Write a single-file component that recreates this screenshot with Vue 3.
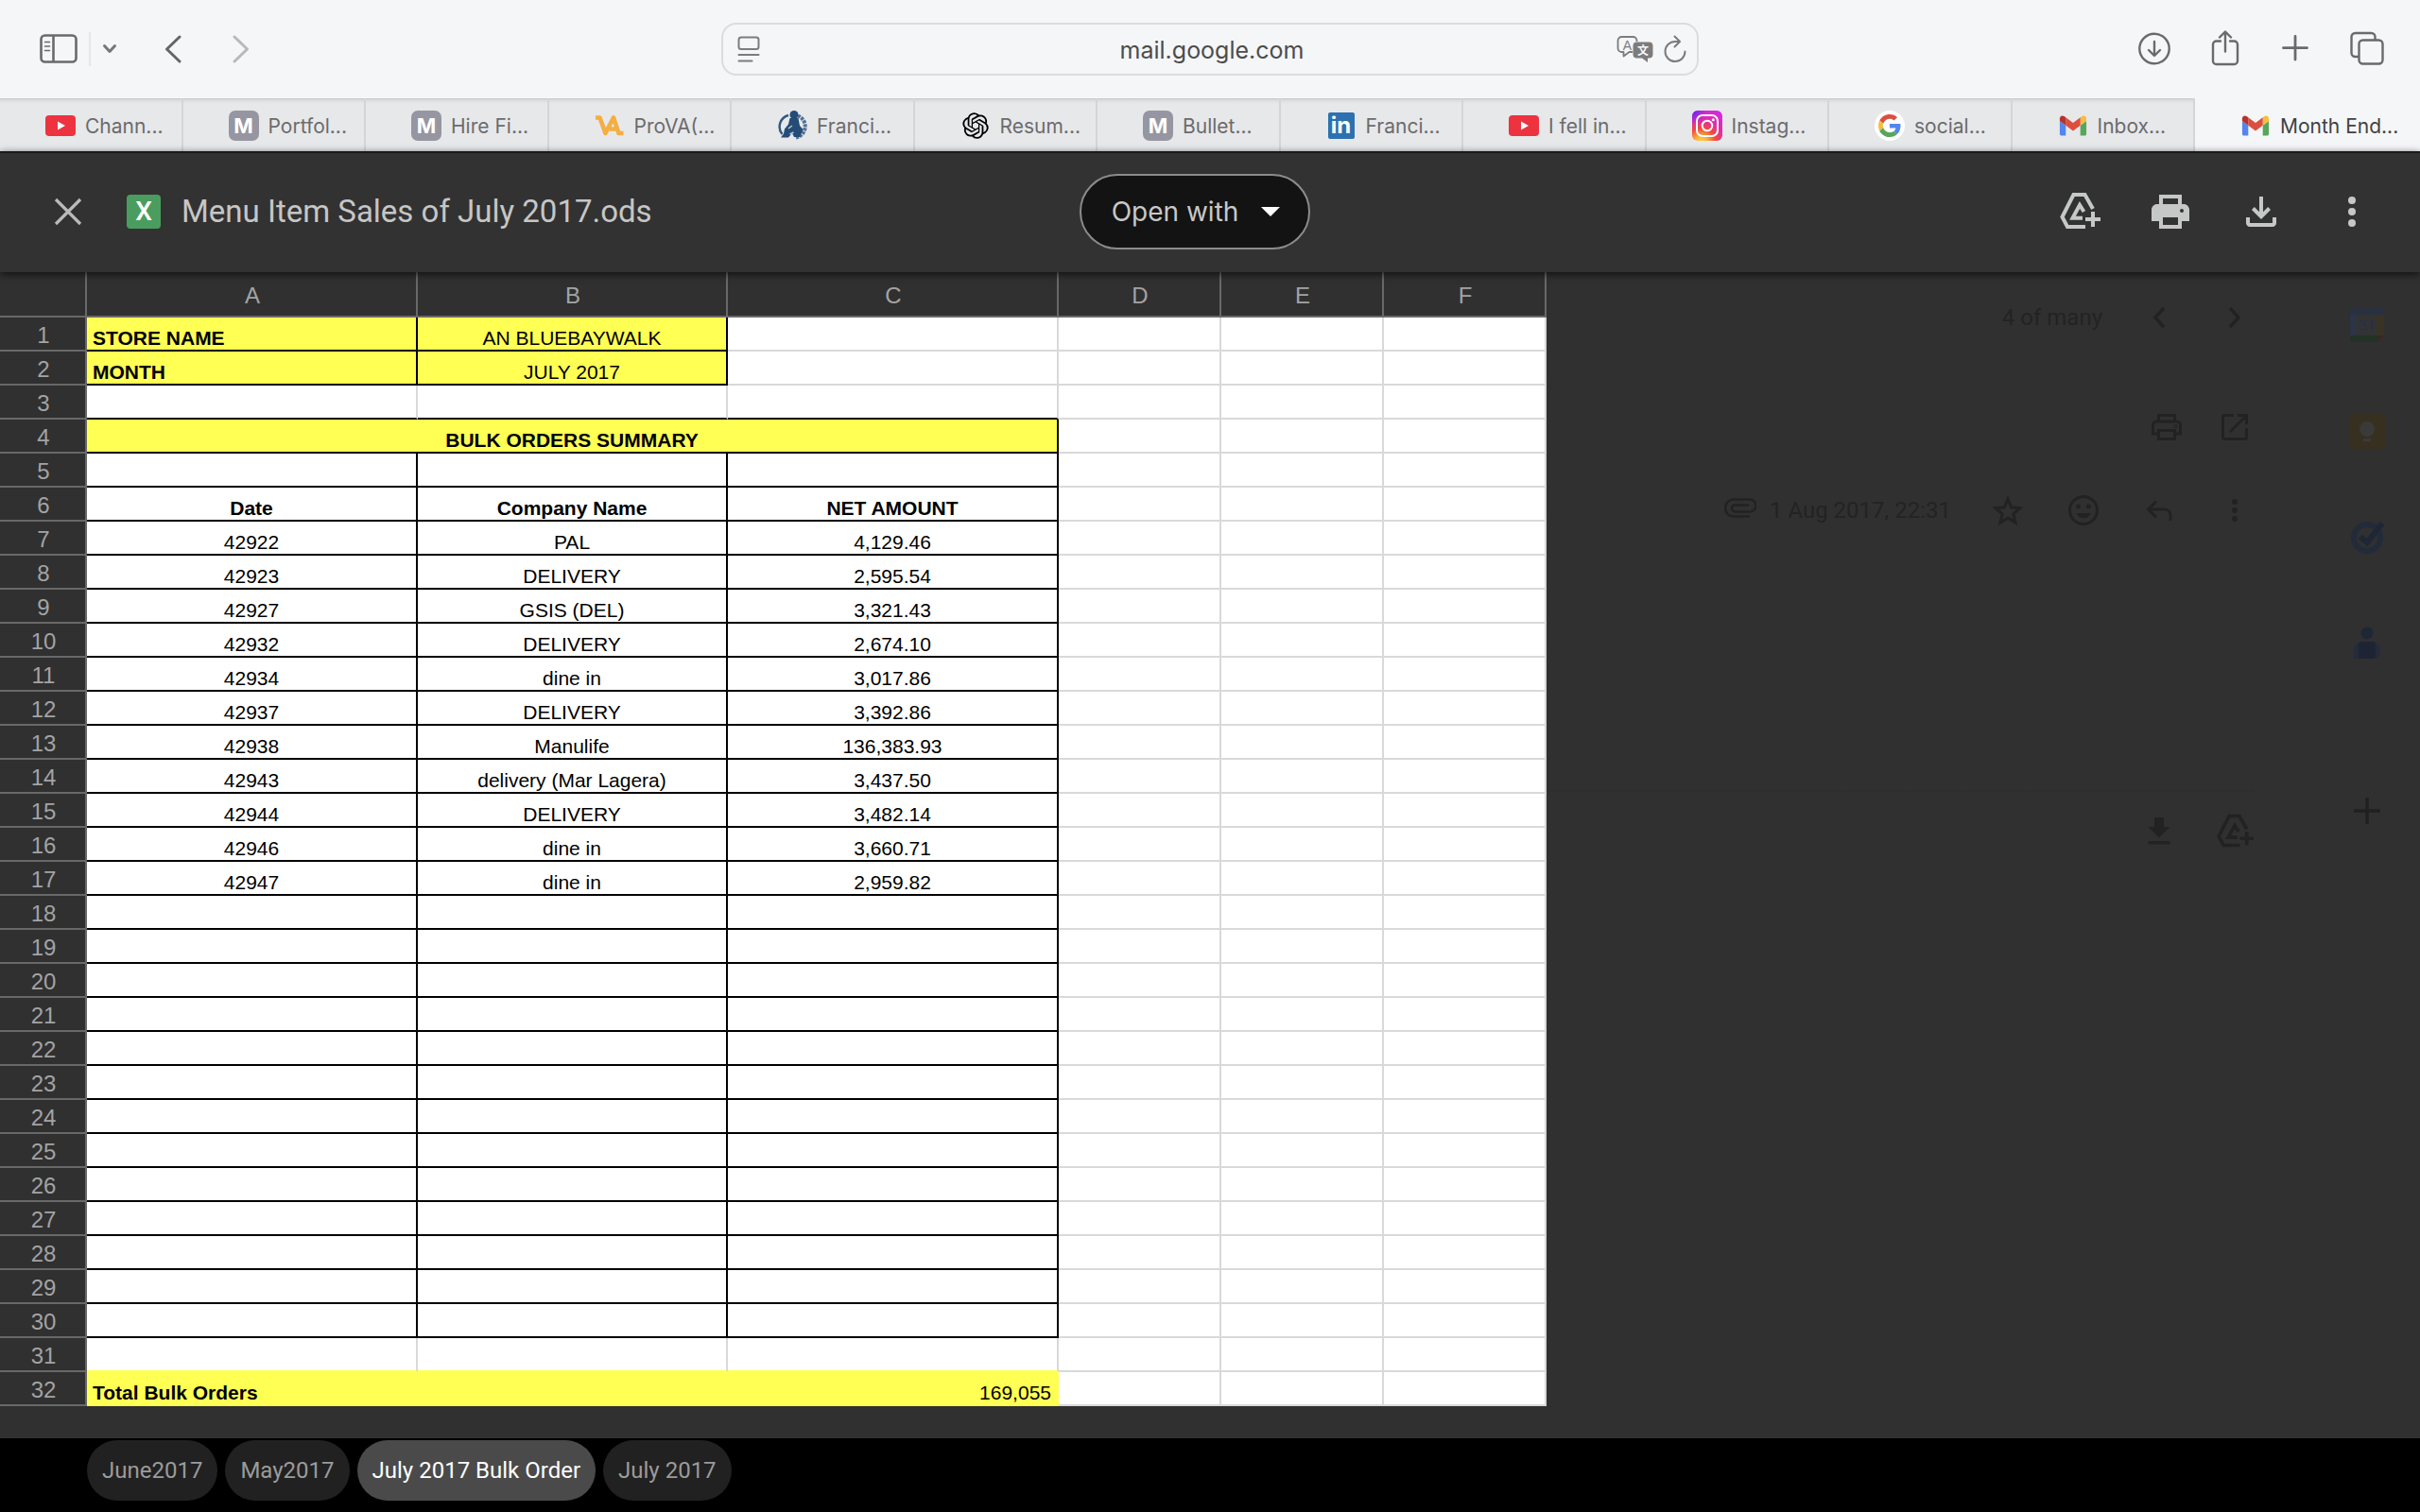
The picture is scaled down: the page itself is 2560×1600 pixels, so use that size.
<template>
  <div class="page">
    <!-- Browser toolbar -->
    <header class="toolbar">
      <div class="toolbar-left">
        <button class="tool" aria-label="Show sidebar">
          <svg width="40" height="32" viewBox="0 0 40 32" fill="none" stroke="#6a6a6c" stroke-width="2.6">
            <rect x="1.5" y="1.5" width="37" height="28" rx="4"></rect>
            <line x1="14.5" y1="1.5" x2="14.5" y2="29.5"></line>
            <path d="M5.5 8.5h5M5.5 13h5M5.5 17.500h5" stroke-width="1.6" stroke-linecap="round"></path>
          </svg>
        </button>
        <span class="tool-divider"></span>
        <button class="tool" aria-label="Tab groups">
          <svg width="16" height="12" viewBox="0 0 16 12" fill="none" stroke="#77777a" stroke-width="3"
            stroke-linecap="round" stroke-linejoin="round">
            <path d="M2.500 2.500l5.500 6 5.500-6"></path>
          </svg>
        </button>
        <button class="tool back" aria-label="Back">
          <svg width="18" height="30" viewBox="0 0 18 30" fill="none" stroke="#656567" stroke-width="3"
            stroke-linecap="round" stroke-linejoin="round">
            <path d="M16 2L2.500 15 16 28"></path>
          </svg>
        </button>
        <button class="tool forward" aria-label="Forward" disabled>
          <svg width="18" height="30" viewBox="0 0 18 30" fill="none" stroke="#b8b9bb" stroke-width="3"
            stroke-linecap="round" stroke-linejoin="round">
            <path d="M2 2l13.500 13L2 28"></path>
          </svg>
        </button>
      </div>

      <div class="address">
        <div class="address-side">
          <button class="tool" aria-label="Page menu">
            <svg width="24" height="28" viewBox="0 0 24 28" fill="none" stroke="#7c7c7d" stroke-width="2"
              stroke-linecap="round">
              <rect x="1.500" y="1.500" width="21" height="12.500" rx="2.500"></rect>
              <path d="M1.500 20h21M1.500 26.500h14"></path>
            </svg>
          </button>
        </div>
        <input class="address-input" type="text" aria-label="Address" v-model="address" />
        <div class="address-side right">
          <button class="tool" aria-label="Translate">
            <svg width="40" height="30" viewBox="0 0 40 30">
              <path d="M17 18h-3.500L7.500 22.500V18H5.500a4 4 0 0 1-4-4V6a4 4 0 0 1 4-4h12a4 4 0 0 1 4 4v1" fill="none"
                stroke="#7c7c7d" stroke-width="1.800" stroke-linejoin="round"></path>
              <path d="M21.500 7.500h13a4 4 0 0 1 4 4v9a4 4 0 0 1-4 4H33v4.500L27 24.500h-5.500a4 4 0 0 1-4-4v-9a4 4 0 0 1 4-4z"
                fill="#7c7c7d"></path>
              <text x="11.500" y="15.500" text-anchor="middle" class="glyph-a">A</text>
              <text x="28" y="21" text-anchor="middle" class="glyph-wen">文</text>
            </svg>
          </button>
          <button class="tool" aria-label="Reload">
            <svg width="24" height="30" viewBox="0 0 24 30" fill="none" stroke="#7c7c7d" stroke-width="2"
              stroke-linecap="round" stroke-linejoin="round">
              <path d="M22.500 17.500A10.500 10.500 0 1 1 12 7h4.500"></path>
              <path d="M11.500 1.500L17 7l-5.500 5.500"></path>
            </svg>
          </button>
        </div>
      </div>

      <div class="toolbar-right">
        <button class="tool" aria-label="Downloads">
          <svg width="40" height="40" viewBox="0 0 40 40" fill="none" stroke="#6a6a6c" stroke-width="2.400"
            stroke-linecap="round" stroke-linejoin="round">
            <circle cx="20" cy="19.500" r="15.700"></circle>
            <path d="M20 12v14.500M14 21l6 6 6-6"></path>
          </svg>
        </button>
        <button class="tool" aria-label="Share">
          <svg width="40" height="40" viewBox="0 0 40 40" fill="none" stroke="#6a6a6c" stroke-width="2.400"
            stroke-linecap="round" stroke-linejoin="round">
            <path d="M15 11.500h-4.500A3.500 3.500 0 0 0 7 15v17.500a3.500 3.500 0 0 0 3.500 3.500h19a3.500 3.500 0 0 0 3.500-3.500V15a3.500 3.500 0 0 0-3.500-3.500H25"></path>
            <path d="M20 22.500V2M14 7.500l6-6 6 6"></path>
          </svg>
        </button>
        <button class="tool" aria-label="New tab">
          <svg width="40" height="40" viewBox="0 0 40 40" fill="none" stroke="#6a6a6c" stroke-width="2.800"
            stroke-linecap="round">
            <path d="M19 6.500v24.500M6.500 18.700h25"></path>
          </svg>
        </button>
        <button class="tool" aria-label="Tab overview">
          <svg width="40" height="40" viewBox="0 0 40 40" fill="none" stroke="#6a6a6c" stroke-width="2.400"
            stroke-linejoin="round">
            <path d="M11 28H7.500a4 4 0 0 1-4-4V7a4 4 0 0 1 4-4h17a4 4 0 0 1 4 4v3.500"></path>
            <rect x="11.500" y="10.500" width="25" height="25" rx="4"></rect>
          </svg>
        </button>
      </div>
    </header>

    <!-- Browser tabs -->
    <nav class="tabs" aria-label="Open tabs">
      <button v-for="(tab, i) in tabs" :key="i" class="tab" :class="{ active: i === activeTab }"
        @click="activeTab = i">
        <svg v-if="tab.icon === 'youtube'" class="favicon" viewBox="0 0 32 32">
          <rect y="5" width="32" height="22" rx="4" fill="#ec333f"></rect>
          <path d="M13 11.500v9l8-4.500z" fill="#fff"></path>
        </svg>
        <span v-else-if="tab.icon === 'letter'" class="favicon letter">M</span>
        <svg v-else-if="tab.icon === 'prova'" class="favicon" viewBox="0 0 32 32" fill="none" stroke="#f4ae41"
          stroke-width="4.600" stroke-linejoin="round">
          <path d="M1 7.500h4.500l6 16.500L20 7.500l5.500 16.500h5M16 19.500h9"></path>
        </svg>
        <svg v-else-if="tab.icon === 'crest'" class="favicon" viewBox="0 0 32 32">
          <path d="M12 5A12.500 12.500 0 0 0 5.500 25" fill="none" stroke="#31587f" stroke-width="2.400"></path>
          <path d="M22 5.500a12 12 0 0 1-2 23" fill="none" stroke="#4f7093" stroke-width="4" stroke-dasharray="3 1"></path>
          <circle cx="18" cy="4.500" r="4.500" fill="#244c77"></circle>
          <path d="M13.500 8h9l1.500 8 3.500 4-3.500 8h-6l-2-4-4 4.500H4l3-4 1-5 4-5z" fill="#244c77"></path>
          <path d="M12 19l4-3M13.500 25l4-2" stroke="#b9c6d2" stroke-width="1.500"></path>
        </svg>
        <svg v-else-if="tab.icon === 'openai'" class="favicon" viewBox="-2 -2 28 28">
          <path
            d="M22.2819 9.8211a5.9847 5.9847 0 0 0-.5157-4.9108 6.0462 6.0462 0 0 0-6.5098-2.9A6.0651 6.0651 0 0 0 4.9807 4.1818a5.9847 5.9847 0 0 0-3.9977 2.9 6.0462 6.0462 0 0 0 .7427 7.0966 5.98 5.98 0 0 0 .511 4.9107 6.051 6.051 0 0 0 6.5146 2.9001A5.9847 5.9847 0 0 0 13.2599 24a6.0557 6.0557 0 0 0 5.7718-4.2058 5.9894 5.9894 0 0 0 3.9977-2.9001 6.0557 6.0557 0 0 0-.7475-7.0729zm-9.022 12.6081a4.4755 4.4755 0 0 1-2.8764-1.0408l.1419-.0804 4.7783-2.7582a.7948.7948 0 0 0 .3927-.6813v-6.7369l2.02 1.1686a.071.071 0 0 1 .038.052v5.5826a4.504 4.504 0 0 1-4.4945 4.4944zm-9.6607-4.1254a4.4708 4.4708 0 0 1-.5346-3.0137l.142.0852 4.783 2.7582a.7712.7712 0 0 0 .7806 0l5.8428-3.3685v2.3324a.0804.0804 0 0 1-.0332.0615L9.74 19.9502a4.4992 4.4992 0 0 1-6.1408-1.6464zM2.3408 7.8956a4.485 4.485 0 0 1 2.3655-1.9728V11.6a.7664.7664 0 0 0 .3879.6765l5.8144 3.3543-2.0201 1.1685a.0757.0757 0 0 1-.071 0l-4.8303-2.7865A4.504 4.504 0 0 1 2.3408 7.872zm16.5963 3.8558L13.1038 8.364 15.1192 7.2a.0757.0757 0 0 1 .071 0l4.8303 2.7913a4.4944 4.4944 0 0 1-.6765 8.1042v-5.6772a.79.79 0 0 0-.407-.667zm2.0107-3.0231l-.142-.0852-4.7735-2.7818a.7759.7759 0 0 0-.7854 0L9.409 9.2297V6.8974a.0662.0662 0 0 1 .0284-.0615l4.8303-2.7866a4.4992 4.4992 0 0 1 6.6802 4.66zM8.3065 12.863l-2.02-1.1638a.0804.0804 0 0 1-.038-.0567V6.0742a4.4992 4.4992 0 0 1 7.3757-3.4537l-.142.0805L8.704 5.459a.7948.7948 0 0 0-.3927.6813zm1.0976-2.3654l2.602-1.4998 2.6069 1.4998v2.9994l-2.5974 1.4997-2.6067-1.4997Z">
          </path>
        </svg>
        <span v-else-if="tab.icon === 'linkedin'" class="favicon linkedin"><b>in</b></span>
        <svg v-else-if="tab.icon === 'instagram'" class="favicon" viewBox="0 0 32 32">
          <defs>
            <radialGradient id="ig" cx="0.3" cy="1.08" r="1.1">
              <stop offset="0" stop-color="#fdd94f"></stop>
              <stop offset="0.2" stop-color="#f9b53c"></stop>
              <stop offset="0.45" stop-color="#f2493f"></stop>
              <stop offset="0.7" stop-color="#e22ca8"></stop>
              <stop offset="1" stop-color="#d62ad8"></stop>
            </radialGradient>
            <radialGradient id="ig-blue" cx="0" cy="0" r="0.5">
              <stop offset="0" stop-color="#4a27f5"></stop>
              <stop offset="1" stop-color="#8a2be2" stop-opacity="0"></stop>
            </radialGradient>
          </defs>
          <rect width="32" height="32" rx="6" fill="url(#ig)"></rect>
          <rect width="32" height="32" rx="6" fill="url(#ig-blue)"></rect>
          <g fill="none" stroke="#fff" stroke-width="2">
            <rect x="5" y="5" width="22" height="22" rx="6"></rect>
            <circle cx="16" cy="16" r="5.300"></circle>
          </g>
          <circle cx="22.300" cy="9.700" r="1.500" fill="#fff"></circle>
        </svg>
        <svg v-else-if="tab.icon === 'google'" class="favicon" viewBox="-8 -8 64 64">
          <circle cx="24" cy="24" r="32" fill="#fff"></circle>
          <path fill="#dc4f3f" d="M24 9.500c3.540 0 6.710 1.220 9.210 3.600l6.850-6.850C35.900 2.380 30.470 0 24 0 14.620 0 6.510 5.380 2.560 13.220l7.980 6.190C12.430 13.720 17.740 9.500 24 9.500z"></path>
          <path fill="#5485ee" d="M46.980 24.550c0-1.570-.15-3.090-.38-4.550H24v9.020h12.940c-.58 2.960-2.260 5.480-4.780 7.180l7.730 6c4.510-4.180 7.090-10.360 7.090-17.650z"></path>
          <path fill="#f4bf40" d="M10.530 28.590c-.48-1.450-.76-2.990-.76-4.590s.27-3.140.76-4.590l-7.980-6.190C.92 16.460 0 20.120 0 24c0 3.880.92 7.540 2.560 10.780l7.970-6.190z"></path>
          <path fill="#58a55c" d="M24 48c6.480 0 11.930-2.130 15.890-5.810l-7.730-6c-2.150 1.450-4.920 2.300-8.160 2.300-6.260 0-11.570-4.220-13.470-9.910l-7.980 6.190C6.510 42.620 14.620 48 24 48z"></path>
        </svg>
        <svg v-else class="favicon" viewBox="46 25 100 100">
          <path fill="#5485ee" d="M58 108h14V74L52 59v43c0 3.320 2.690 6 6 6"></path>
          <path fill="#58a55c" d="M120 108h14c3.320 0 6-2.690 6-6V59l-20 15"></path>
          <path fill="#f4bf40" d="M120 48v26l20-15v-8c0-7.420-8.470-11.650-14.400-7.200"></path>
          <path fill="#dc4f3f" d="M72 74V48l24 18 24-18v26L96 92"></path>
          <path fill="#b5332b" d="M52 51v8l20 15V48l-5.600-4.200c-5.940-4.450-14.400-.22-14.400 7.200"></path>
        </svg>
        <span class="tab-title">{{ tab.title }}</span>
      </button>
    </nav>

    <!-- Attachment viewer -->
    <main class="viewer">
      <div class="viewer-header">
        <div class="file">
          <button class="tool close" aria-label="Close">
            <svg width="32" height="32" viewBox="0 0 32 32" stroke="#bababa" stroke-width="3.200">
              <path d="M3 3l26 26M29 3L3 29"></path>
            </svg>
          </button>
          <span class="file-type">X</span>
          <h1 class="file-name">Menu Item Sales of July 2017.ods</h1>
        </div>
        <button class="open-with">
          Open with
          <svg width="20" height="10" viewBox="0 0 20 10" fill="#fff">
            <path d="M0 0h20L10 10z"></path>
          </svg>
        </button>
        <div class="actions">
          <button class="action" aria-label="Add to Drive">
            <svg width="48" height="48" viewBox="0 0 48 48" fill="none" stroke="#c6c7c7" stroke-width="4">
              <path d="M38 21L29.500 6h-12L5.500 29.500 11 40h19"></path>
              <path d="M28.500 24L24 17l-7.500 13.700H27M38 24v16M30 32h16"></path>
            </svg>
          </button>
          <button class="action" aria-label="Print">
            <svg width="48" height="48" viewBox="0 0 24 24" fill="#c6c7c7">
              <path fill-rule="evenodd"
                d="M6 8V3h12v5h-2V5H8v3zM5 8h14c1.660 0 3 1.340 3 3v6h-4v4H6v-4H2v-6c0-1.660 1.340-3 3-3zm3 7v4h8v-4zm10-4.500a1 1 0 1 0 0 2 1 1 0 0 0 0-2z">
              </path>
            </svg>
          </button>
          <button class="action" aria-label="Download">
            <svg width="48" height="48" viewBox="0 0 24 24" fill="#c6c7c7">
              <path
                d="M12 16l-5-5 1.400-1.450 2.600 2.600V4h2v8.150l2.600-2.600L17 11zM6 20q-.825 0-1.412-.587T4 18v-3h2v3h12v-3h2v3q0 .825-.587 1.413T18 20z">
              </path>
            </svg>
          </button>
          <button class="action" aria-label="More actions">
            <svg width="48" height="48" viewBox="0 0 24 24" fill="#c6c7c7">
              <circle cx="12" cy="6" r="2"></circle>
              <circle cx="12" cy="12" r="2"></circle>
              <circle cx="12" cy="18" r="2"></circle>
            </svg>
          </button>
        </div>
      </div>

      <div class="viewer-body">
        <!-- Spreadsheet -->
        <table class="sheet">
          <colgroup>
            <col class="col-num" />
            <col class="col-a" />
            <col class="col-b" />
            <col class="col-a" />
            <col class="col-d" />
            <col class="col-d" />
            <col class="col-d" />
          </colgroup>
          <thead>
            <tr>
              <th></th>
              <th v-for="c in columns" :key="c" scope="col">{{ c }}</th>
            </tr>
          </thead>
          <tbody>
            <tr v-for="row in rows" :key="row.num">
              <th scope="row">{{ row.num }}</th>
              <td v-for="(cell, i) in row.cells" :key="i" :colspan="cell.span || 1" :class="cell.cls">{{ cell.text }}</td>
              <td></td>
              <td></td>
              <td></td>
            </tr>
          </tbody>
        </table>

        <!-- Dimmed mail behind the viewer -->
        <div class="mail">
          <div class="mail-row pager">
            <span class="mail-text">4 of many</span>
            <svg class="mail-icon" viewBox="0 0 40 40" fill="none" stroke-width="3.400"><path d="M25 10L16 20l9 10"></path></svg>
            <svg class="mail-icon" viewBox="0 0 40 40" fill="none" stroke-width="3.400"><path d="M15 10l9 10-9 10"></path></svg>
          </div>
          <div class="mail-row subject">
            <svg class="mail-icon" viewBox="0 0 40 40" fill="none" stroke-width="3">
              <path d="M11.500 13V7.500h17V13M11.500 27H5.500V18a4 4 0 0 1 4-4h21a4 4 0 0 1 4 4v9h-6M11.500 23.500h17v9h-17z"></path>
              <circle cx="29.500" cy="19" r="0.500"></circle>
            </svg>
            <svg class="mail-icon" viewBox="0 0 40 40" fill="none" stroke-width="3">
              <path d="M19 7.500H9a1.500 1.500 0 0 0-1.500 1.500v22A1.500 1.500 0 0 0 9 32.500h22a1.500 1.500 0 0 0 1.500-1.500V21M23 7.500h9.500V17M32 8L15 25"></path>
            </svg>
          </div>
          <div class="mail-row message">
            <span class="sent">
              <svg width="34" height="28" viewBox="0 0 34 28" fill="none" stroke-width="2.600">
                <path d="M27 20.500H10a9 9 0 0 1 0-18h17a6.500 6.500 0 0 1 0 13H11.500a3.500 3.500 0 0 1 0-7H26"></path>
              </svg>
              <span class="mail-text">1 Aug 2017, 22:31</span>
            </span>
            <svg class="mail-icon" viewBox="0 0 40 40" fill="none" stroke-width="3">
              <path d="M20 8l3.600 8.800 9.400.8-7.200 6.200 2.200 9.200-8-4.900-8 4.900 2.200-9.200L7 17.600l9.400-.8z"></path>
            </svg>
            <svg class="mail-icon" viewBox="0 0 40 40" fill="none" stroke-width="3">
              <circle cx="20" cy="20" r="14.500"></circle>
              <path class="solid" d="M12.500 23h15a8 8 0 0 1-15 0z"></path>
              <circle class="solid" cx="14.500" cy="16" r="2.500"></circle>
              <circle class="solid" cx="25.500" cy="16" r="2.500"></circle>
            </svg>
            <svg class="mail-icon" viewBox="0 0 40 40" fill="none" stroke-width="3">
              <path d="M17 10.500l-8.500 8.500 8.500 8.500M8.500 19H26a6 6 0 0 1 6 6v6"></path>
            </svg>
            <svg class="mail-icon" viewBox="0 0 40 40" fill="none">
              <circle class="solid" cx="20" cy="11" r="3"></circle>
              <circle class="solid" cx="20" cy="20" r="3"></circle>
              <circle class="solid" cx="20" cy="29" r="3"></circle>
            </svg>
          </div>
          <div class="mail-row attachments">
            <svg class="mail-icon" viewBox="0 0 40 40" fill="none">
              <path class="solid" d="M15 5h10v10h6.500L20 26.500 8.500 15H15zM8.500 30h23v3.500h-23z"></path>
            </svg>
            <svg class="mail-icon" viewBox="2 2 44 44" fill="none" stroke-width="4">
              <path d="M38 21L29.500 6h-12L5.500 29.500 11 40h19M28.500 24L24 17l-7.500 13.700H27M38 24v16M30 32h16"></path>
            </svg>
          </div>
        </div>

        <aside class="rail">
          <svg width="38" height="38" viewBox="0 0 38 38">
            <path d="M3 1h32a2 2 0 0 1 2 2v5H1V3a2 2 0 0 1 2-2z" fill="#293040"></path>
            <path d="M1 8h7v22H1z" fill="#2c3445"></path>
            <path d="M8 8h22v22H8z" fill="#333333"></path>
            <path d="M30 8h7v22h-7z" fill="#3a3222"></path>
            <path d="M1 30h29v7H3a2 2 0 0 1-2-2z" fill="#233126"></path>
            <path d="M30 30h7l-7 7z" fill="#3a2624"></path>
            <text x="19" y="25" text-anchor="middle" class="day">31</text>
          </svg>
          <svg width="38" height="38" viewBox="0 0 38 38">
            <rect width="38" height="38" rx="3" fill="#373020"></rect>
            <circle cx="19" cy="17" r="8" fill="#3a3a38"></circle>
            <path d="M15 27h8v3h-8z" fill="#3a3a38"></path>
          </svg>
          <svg width="38" height="38" viewBox="0 0 38 38" fill="none">
            <circle cx="19" cy="20" r="14" stroke="#232b3a" stroke-width="6"></circle>
            <path d="M12 19l7 6L35 5" stroke="#1f2635" stroke-width="6"></path>
          </svg>
          <svg width="38" height="38" viewBox="0 0 38 38">
            <circle cx="19" cy="9" r="6.500" fill="#1f2734"></circle>
            <path d="M5 36v-9a9 9 0 0 1 9-9h10a9 9 0 0 1 9 9v3a6 6 0 0 1-6 6z" fill="#252b3a"></path>
            <path d="M10 36V22a4 4 0 0 1 4-4h10a4 4 0 0 1 4 4v10a4 4 0 0 1-4 4z" fill="#1e2433"></path>
          </svg>
          <svg class="rail-add" width="38" height="38" viewBox="0 0 38 38" stroke="#202020" stroke-width="3.400">
            <path d="M19 5v28M5 19h28"></path>
          </svg>
        </aside>
      </div>

      <footer class="sheet-tabs">
        <button v-for="name in sheets" :key="name" class="sheet-tab" :class="{ active: name === activeSheet }"
          @click="activeSheet = name">{{ name }}</button>
      </footer>
    </main>
  </div>
</template>

<script setup>
import { ref } from 'vue'

const address = ref('mail.google.com')
const activeTab = ref(12)
const activeSheet = ref('July 2017 Bulk Order')

const tabs = [
  { icon: 'youtube', title: 'Chann...' },
  { icon: 'letter', title: 'Portfol...' },
  { icon: 'letter', title: 'Hire Fi...' },
  { icon: 'prova', title: 'ProVA(...' },
  { icon: 'crest', title: 'Franci...' },
  { icon: 'openai', title: 'Resum...' },
  { icon: 'letter', title: 'Bullet...' },
  { icon: 'linkedin', title: 'Franci...' },
  { icon: 'youtube', title: 'I fell in...' },
  { icon: 'instagram', title: 'Instag...' },
  { icon: 'google', title: 'social...' },
  { icon: 'gmail', title: 'Inbox...' },
  { icon: 'gmail', title: 'Month End...' }
]

const sheets = ['June2017', 'May2017', 'July 2017 Bulk Order', 'July 2017']
const columns = ['A', 'B', 'C', 'D', 'E', 'F']

const orders = [
  ['42922', 'PAL', '4,129.46'],
  ['42923', 'DELIVERY', '2,595.54'],
  ['42927', 'GSIS (DEL)', '3,321.43'],
  ['42932', 'DELIVERY', '2,674.10'],
  ['42934', 'dine in', '3,017.86'],
  ['42937', 'DELIVERY', '3,392.86'],
  ['42938', 'Manulife', '136,383.93'],
  ['42943', 'delivery (Mar Lagera)', '3,437.50'],
  ['42944', 'DELIVERY', '3,482.14'],
  ['42946', 'dine in', '3,660.71'],
  ['42947', 'dine in', '2,959.82']
]

// Cells for columns A to C, D to F are always empty
const cellsFor = (num) => {
  if (num === 1 || num === 2) {
    const [label, value] = num === 1 ? ['STORE NAME', 'AN BLUEBAYWALK'] : ['MONTH', 'JULY 2017']
    return [
      { text: label, cls: 'boxed yellow bold left' },
      { text: value, cls: 'boxed yellow' },
      { text: '' }
    ]
  }
  if (num === 3) return [{ cls: 'underlined' }, { cls: 'underlined' }, { cls: 'underlined' }]
  if (num === 4) return [{ text: 'BULK ORDERS SUMMARY', span: 3, cls: 'boxed yellow bold' }]
  if (num === 6) {
    return ['Date', 'Company Name', 'NET AMOUNT'].map((text) => ({ text, cls: 'boxed bold' }))
  }
  if (num === 31) return [{ cls: 'above-total' }, { cls: 'above-total' }, { cls: 'above-total' }]
  if (num === 32) {
    return [
      { text: 'Total Bulk Orders', cls: 'yellow total bold left' },
      { text: '', cls: 'yellow total' },
      { text: '169,055', cls: 'yellow total right' }
    ]
  }
  const order = orders[num - 7] || ['', '', '']
  return order.map((text) => ({ text, cls: 'boxed' }))
}

const rows = Array.from({ length: 32 }, (_, i) => ({ num: i + 1, cells: cellsFor(i + 1) }))
</script>

<style>
body {
  margin: 0;
  background-color: #000;
}
</style>

<style scoped>
.page {
  display: flex;
  flex-direction: column;
  min-height: 100vh;
  font-family: Inter, "Liberation Sans", "Noto Sans CJK SC", sans-serif;
}

button {
  font: inherit;
  border: none;
  cursor: pointer;
}

svg {
  display: block;
  flex: none;
}

.tool {
  display: flex;
  align-items: center;
  background: none;
  padding: 0;
}

/* Browser toolbar */
.toolbar {
  display: grid;
  grid-template-columns: 1fr 1034px 1fr;
  align-items: center;
  height: 104px;
  background-color: #f5f6f8;
}

.toolbar-left {
  display: flex;
  align-items: center;
  padding-left: 42px;
}

.tool-divider {
  width: 2px;
  height: 36px;
  margin: 0 12px;
  background-color: #e6e7e9;
}

.back {
  margin-left: 50px;
}

.forward {
  margin-left: 54px;
}

.address {
  display: flex;
  align-items: center;
  height: 56px;
  box-sizing: border-box;
  padding: 0 11px 0 15px;
  border: 2px solid #dbdcde;
  border-radius: 16px;
}

.address-side {
  display: flex;
  width: 80px;
}

.address-side.right {
  justify-content: flex-end;
  gap: 10px;
}

.address-input {
  flex: 1;
  min-width: 0;
  padding: 2px 0 0;
  border: none;
  outline: none;
  background: none;
  text-align: center;
  font-family: inherit;
  font-size: 25px;
  color: #4c4c4d;
}

.glyph-a {
  font: 14px "Liberation Sans", sans-serif;
  fill: #7c7c7d;
}

.glyph-wen {
  font: bold 12px "Noto Sans CJK SC", sans-serif;
  fill: #f5f6f8;
}

.toolbar-right {
  display: flex;
  justify-content: flex-end;
  gap: 35px;
  padding-right: 36px;
}

/* Browser tabs */
.tabs {
  display: flex;
  height: 56px;
  background-color: #e7e8ea;
}

.tab {
  display: flex;
  flex: 1;
  align-items: center;
  gap: 10px;
  min-width: 0;
  padding: 2px 0 0 48px;
  border-right: 2px solid #d4d5d7;
  background: linear-gradient(#c3c4c6 0, #dcdddf 2px, #e7e8ea 6px);
  color: #6b6b6d;
  font-size: 21px;
  white-space: nowrap;
}

.tab.active {
  flex: none;
  width: 238px;
  border-right: none;
  background: #f5f6f8;
  color: #414143;
}

.favicon {
  flex: none;
  width: 32px;
  height: 32px;
}

.letter {
  border-radius: 7px;
  background-color: #9696a2;
  color: #fff;
  font-size: 22px;
  font-weight: 700;
  line-height: 32px;
  text-align: center;
}

.linkedin {
  display: flex;
  align-items: center;
  justify-content: center;
}

.linkedin b {
  width: 28px;
  height: 28px;
  border-radius: 2px;
  background-color: #2d71b0;
  color: #fff;
  font-size: 24px;
  line-height: 28px;
  text-align: center;
}

/* Attachment viewer */
.viewer {
  display: flex;
  flex: 1;
  flex-direction: column;
  background-color: #303030;
}

.viewer-header {
  position: relative;
  display: grid;
  grid-template-columns: 1fr auto 1fr;
  align-items: center;
  height: 128px;
  box-sizing: border-box;
  padding: 0 32px 2px 0;
  border-top: 2px solid #1a1a1a;
  background-color: #323232;
  box-shadow: 0 2px 8px rgba(0, 0, 0, 0.7);
}

.file {
  display: flex;
  align-items: center;
  padding-left: 56px;
}

.file-type {
  width: 36px;
  height: 36px;
  margin: 0 22px 0 46px;
  border-radius: 4px;
  background-color: #4b9d5f;
  color: #fff;
  font-family: Roboto, sans-serif;
  font-size: 28px;
  font-weight: 500;
  line-height: 36px;
  text-align: center;
}

.file-name {
  margin: 0;
  padding-bottom: 2px;
  color: #c6c6c6;
  font-family: Roboto, sans-serif;
  font-size: 33px;
  font-weight: 400;
  white-space: nowrap;
}

.open-with {
  display: flex;
  align-items: center;
  gap: 24px;
  height: 80px;
  padding: 0 30px 0 32px;
  border: 2px solid #8c8c8c;
  border-radius: 40px;
  background-color: #131313;
  color: #c8c8c8;
  font-size: 28px;
  white-space: nowrap;
}

.actions {
  display: flex;
  justify-content: flex-end;
  gap: 16px;
}

.action {
  display: flex;
  justify-content: center;
  width: 80px;
  padding: 0;
  background: none;
}

.viewer-body {
  display: flex;
  flex: 1;
  align-items: flex-start;
}

/* Spreadsheet */
.sheet {
  flex: none;
  width: 1636px;
  margin-bottom: 34px;
  table-layout: fixed;
  border-collapse: separate;
  border-spacing: 0;
  font-family: "Liberation Sans", Arial, sans-serif;
  font-size: 21px;
  line-height: 24px;
  color: #000;
}

.col-num {
  width: 92px;
}

.col-a {
  width: 350px;
}

.col-b {
  width: 328px;
}

.col-d {
  width: 172px;
}

.sheet th {
  height: 36px;
  box-sizing: border-box;
  padding: 3px 0 0 2px;
  border-right: 2px solid #686868;
  border-bottom: 2px solid #686868;
  background-color: #303030;
  color: #a3a3a3;
  font-size: 24px;
  font-weight: 400;
}

.sheet thead th {
  height: 48px;
}

.sheet td {
  height: 36px;
  box-sizing: border-box;
  padding: 0 6px;
  border-right: 2px solid #d9d9d9;
  border-bottom: 2px solid #d9d9d9;
  background-color: #fff;
  text-align: center;
  vertical-align: bottom;
  white-space: nowrap;
}

.sheet td.boxed {
  border-color: #000;
}

.sheet td.underlined {
  border-bottom-color: #000;
}

.sheet td.yellow {
  background-color: #ffff54;
}

.sheet td.above-total {
  border-bottom-color: #ffff54;
}

.sheet td.total {
  border-color: #ffff54;
}

.sheet td.bold {
  font-weight: 700;
}

.sheet td.left {
  text-align: left;
}

.sheet td.right {
  text-align: right;
}

/* Dimmed mail */
.mail {
  flex: 1;
  padding: 24px 64px 0 0;
}

.mail-row {
  display: flex;
  align-items: center;
  justify-content: flex-end;
  gap: 40px;
  height: 48px;
}

.subject {
  gap: 32px;
  margin-top: 68px;
}

.message {
  margin-top: 40px;
}

.attachments {
  margin-top: 272px;
  padding-top: 18px;
  border-top: 2px dotted #2d2d2d;
}

.mail-text {
  color: #232323;
  font-family: Roboto, sans-serif;
  font-size: 24px;
}

.sent {
  display: flex;
  align-items: center;
  gap: 14px;
}

.mail svg {
  stroke: #222;
}

.mail-icon {
  width: 40px;
  height: 40px;
}

.mail .solid {
  fill: #222;
  stroke: none;
}

.rail {
  display: flex;
  flex-direction: column;
  align-items: center;
  gap: 74px;
  width: 112px;
  padding-top: 37px;
}

.rail-add {
  margin-top: 66px;
}

.day {
  font: 16px Roboto, sans-serif;
  fill: #273049;
}

/* Sheet tabs */
.sheet-tabs {
  display: flex;
  gap: 8px;
  height: 78px;
  box-sizing: border-box;
  padding: 2px 0 12px 92px;
  background-color: #000;
}

.sheet-tab {
  padding: 0 16px;
  border-radius: 32px;
  background-color: #212121;
  color: #9b9b9b;
  font-family: Roboto, sans-serif;
  font-size: 24px;
  white-space: nowrap;
}

.sheet-tab.active {
  background-color: #4a4a4a;
  color: #fff;
}
</style>
